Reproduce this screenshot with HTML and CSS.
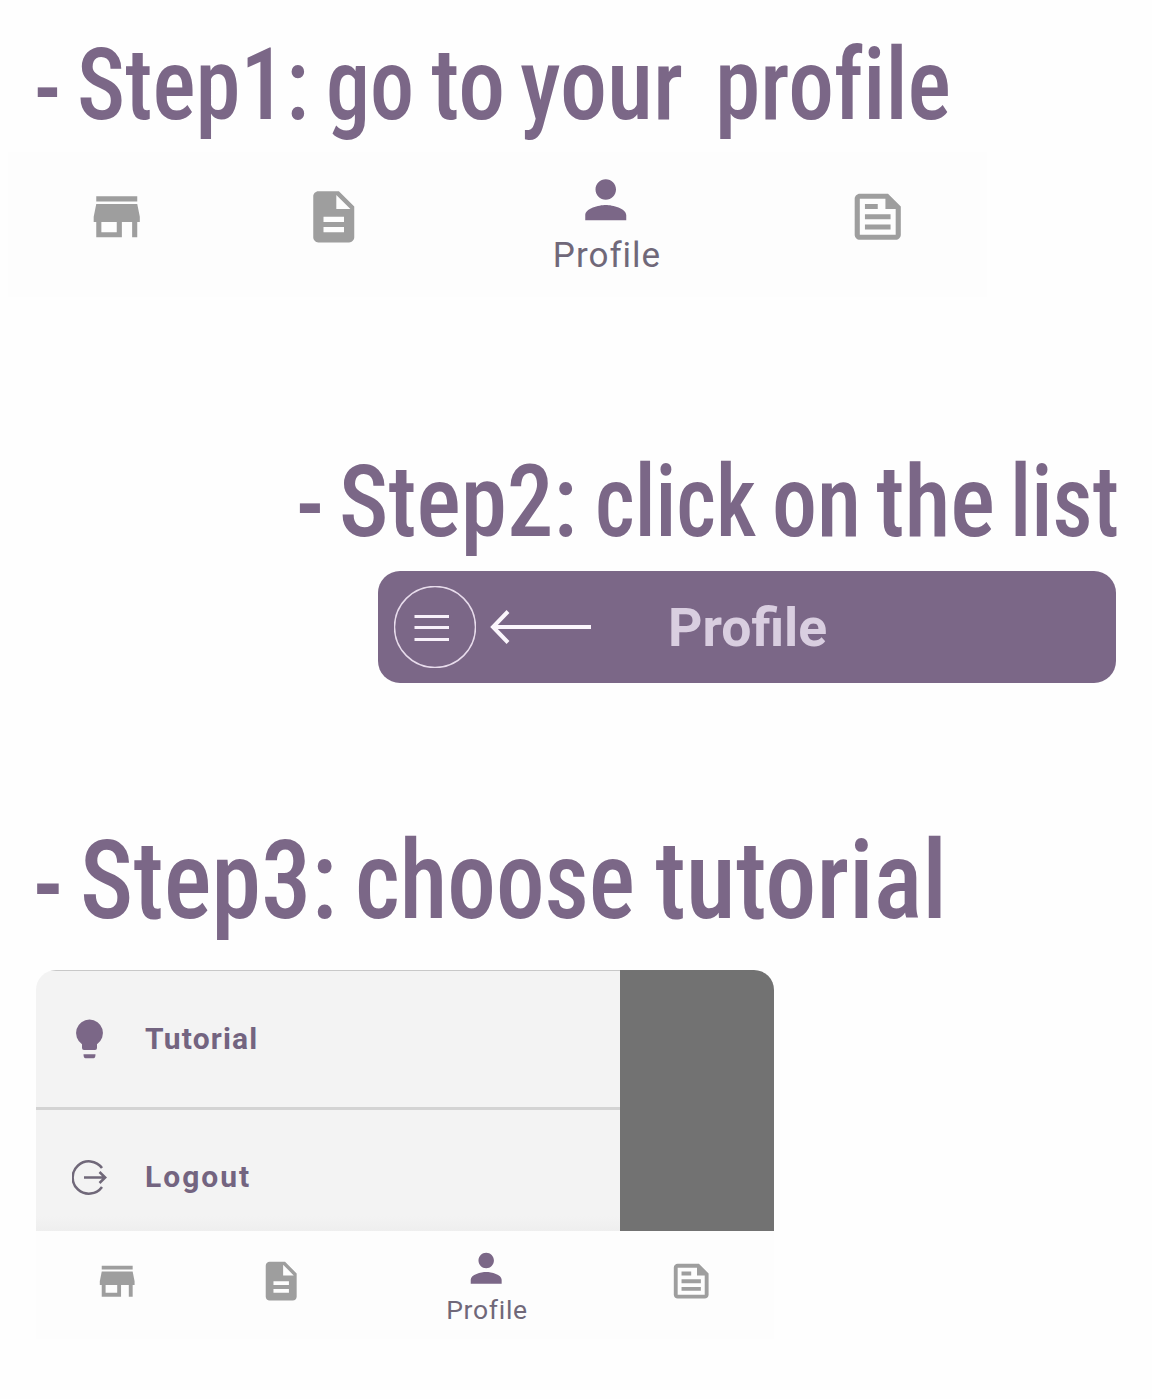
FILE: index.html
```html
<!DOCTYPE html>
<html lang="en">
<head>
<meta charset="utf-8">
<title>How to open the tutorial</title>
<link rel="stylesheet" href="styles.css">
</head>
<body>
<svg class="sprite" aria-hidden="true">
  <symbol id="store" viewBox="0 0 24 24"><path d="M20 4H4v2h16V4zm1 10v-2l-1-5H4l-1 5v2h1v6h10v-6h4v6h2v-6h1zm-9 4H6v-4h6v4z"/></symbol>
  <symbol id="document" viewBox="0 0 24 24"><path d="M14 2H6c-1.1 0-2 .9-2 2v16c0 1.100.9 2 2 2h12c1.100 0 2-.9 2-2V8l-6-6zm2 16H8v-2h8v2zm0-4H8v-2h8v2zm-3-5V3.500L18.500 9H13z"/></symbol>
  <symbol id="person" viewBox="0 0 24 24"><path d="M12 12c2.210 0 4-1.790 4-4s-1.790-4-4-4-4 1.790-4 4 1.790 4 4 4zm0 2c-2.670 0-8 1.340-8 4v2h16v-2c0-2.660-5.330-4-8-4z"/></symbol>
  <symbol id="news" viewBox="0 0 24 24"><path fill-rule="evenodd" d="M16 3H5C3.900 3 3 3.900 3 5v14c0 1.100.9 2 2 2h14c1.100 0 2-.9 2-2V8l-5-5zM5 19V5h10v4h4v10H5zM7 7h5v2H7zM7 11h10v2H7zM7 15h10v2H7z"/></symbol>
</svg>
<main class="guide">
  <section class="step step-one">
    <h1 class="title">
      <svg class="title-line" width="1152" height="152" viewBox="0 0 1152 152">
        <text x="34" y="123" textLength="27" lengthAdjust="spacingAndGlyphs">-</text>
        <text x="77" y="119" textLength="232" lengthAdjust="spacingAndGlyphs">Step1:</text>
        <text x="326" y="119" textLength="88" lengthAdjust="spacingAndGlyphs">go</text>
        <text x="431" y="119" textLength="74" lengthAdjust="spacingAndGlyphs">to</text>
        <text x="520" y="119" textLength="163" lengthAdjust="spacingAndGlyphs">your</text>
        <text x="715" y="119" textLength="236" lengthAdjust="spacingAndGlyphs">profile</text>
      </svg>
    </h1>
    <nav class="tabs tabs-large">
      <span class="tab"><svg><use href="#store"/></svg></span>
      <span class="tab"><svg><use href="#document"/></svg></span>
      <span class="tab active"><svg><use href="#person"/></svg><span class="label">Profile</span></span>
      <span class="tab"><svg><use href="#news"/></svg></span>
    </nav>
  </section>
  <section class="step step-two">
    <h1 class="title">
      <svg class="title-line" width="1152" height="151" viewBox="0 420 1152 151">
        <text x="296" y="539" textLength="28" lengthAdjust="spacingAndGlyphs">-</text>
        <text x="339" y="535.500" textLength="238" lengthAdjust="spacingAndGlyphs">Step2:</text>
        <text x="595" y="535.500" textLength="161" lengthAdjust="spacingAndGlyphs">click</text>
        <text x="772" y="535.500" textLength="89" lengthAdjust="spacingAndGlyphs">on</text>
        <text x="876" y="535.500" textLength="119" lengthAdjust="spacingAndGlyphs">the</text>
        <text x="1010" y="535.500" textLength="109" lengthAdjust="spacingAndGlyphs">list</text>
      </svg>
    </h1>
    <div class="app-bar">
      <svg class="menu" width="82" height="82" viewBox="0 0 82 82"><circle cx="41" cy="41" r="40.500"/><path d="M20.500 30.500H55M20.500 41.500H55M20.500 53.500H55"/></svg>
      <svg class="arrow" width="104" height="36" viewBox="0 0 104 36"><path d="M102 18H4M19 2.500 4 18l15 15.500"/></svg>
      <span class="bar-title">Profile</span>
    </div>
  </section>
  <section class="step step-three">
    <h1 class="title title-big">
      <svg class="title-line" width="1152" height="170" viewBox="0 800 1152 170">
        <text x="33" y="921.500" textLength="30" lengthAdjust="spacingAndGlyphs">-</text>
        <text x="80" y="917.500" textLength="257" lengthAdjust="spacingAndGlyphs">Step3:</text>
        <text x="355" y="917.500" textLength="280" lengthAdjust="spacingAndGlyphs">choose</text>
        <text x="655" y="917.500" textLength="292" lengthAdjust="spacingAndGlyphs">tutorial</text>
      </svg>
    </h1>
    <div class="drawer">
      <div class="menu-list">
        <div class="menu-item"><svg width="36" height="44" viewBox="0 0 36 44"><path class="solid" d="M17.500 2.500A13.500 13.500 0 0 0 10 27.200V31q0 2 2 2h11q2 0 2-2v-3.800A13.500 13.500 0 0 0 17.500 2.500z"/><path class="solid" d="M11.500 37.300h12q0 4-2 4h-8q-2 0-2-4z"/></svg><span>Tutorial</span></div>
        <div class="menu-item logout"><svg width="36" height="44" viewBox="0 0 36 44"><path class="line" d="M30 12A16.200 16.200 0 1 0 30 31M12 21.500h21M27.500 16 33.200 21.500 27.500 27"/></svg><span>Logout</span></div>
      </div>
      <div class="scrim"></div>
    </div>
    <nav class="tabs tabs-small">
      <span class="tab"><svg><use href="#store"/></svg></span>
      <span class="tab"><svg><use href="#document"/></svg></span>
      <span class="tab active"><svg><use href="#person"/></svg><span class="label">Profile</span></span>
      <span class="tab"><svg><use href="#news"/></svg></span>
    </nav>
  </section>
</main>
</body>
</html>
```
FILE: styles.css
```css
* { box-sizing: border-box; }
body { margin: 0; background: #fefefe; font-family: Roboto, "Liberation Sans", sans-serif; color: #7b6787; }
svg { display: block; flex: none; }
.sprite { display: none; }
.guide { width: 1152px; height: 1399px; overflow: hidden; }

.title { margin: 0; font-size: 101px; font-weight: 500; font-stretch: 75%; font-variant-ligatures: none; }
.title-big { font-size: 110px; }
.title-line { overflow: visible; }
.title-line text { fill: #7b6787; }

.step-one { height: 420px; }
.step-two { height: 380px; }

.tabs { display: grid; background: #fdfdfd; }
.tab { display: flex; flex-direction: column; align-items: center; fill: #9e9e9e; }
.active { fill: #7b6787; color: #706879; }
.label { white-space: nowrap; }
.tabs-large { width: 979px; height: 145px; margin-left: 8px; grid-template-columns: 217px 218px 326px 218px; }
.tabs-large svg { width: 61.5px; height: 61.5px; }
.tabs-large .tab { padding-top: 34px; }
.tabs-large .active { padding-top: 17px; }
.tabs-large .label { font-size: 35px; line-height: 40px; letter-spacing: 1px; margin: 5px 0 0 2px; }

.app-bar { display: flex; align-items: center; width: 738px; height: 112px; margin-left: 378px; padding-left: 16px; border-radius: 22px; background: #7b6787; }
.menu circle { fill: none; stroke: #e8dcec; stroke-width: 1.5; }
.menu path { stroke: #f8f1fa; stroke-width: 3; }
.arrow { margin-left: 13px; }
.arrow path { fill: none; stroke: #fbf6fc; stroke-width: 4; }
.bar-title { margin-left: 75px; padding-top: 1px; font-size: 53.5px; font-weight: 700; color: #d9cee0; }

.drawer { display: flex; width: 738px; height: 261px; margin-left: 36px; border-radius: 20px 20px 0 0; overflow: hidden; }
.menu-list { width: 584px; background: linear-gradient(#f3f3f3 245px, #eeeeee); border-top: 1.5px solid #c8c8c8; }
.menu-item { display: flex; align-items: center; gap: 37px; height: 135px; padding-left: 36px; font-size: 30px; font-weight: 700; letter-spacing: 1.2px; color: #736480; }
.menu-item:first-child { border-bottom: 3px solid #d3d3d3; height: 139px; }
.menu-item:first-child span { margin-top: -2px; }
.logout { letter-spacing: 2px; }
.logout span { margin-top: -2px; }
.scrim { flex: 1; background: #727272; }
.solid { fill: #7b6787; }
.line { fill: none; stroke: #706879; stroke-width: 2.5; }

.tabs-small { width: 738px; height: 108px; margin-left: 35.5px; grid-template-columns: 164px 164px 246px 164px; }
.tabs-small svg { width: 46.4px; height: 46.4px; }
.tabs-small .tab { padding-top: 27px; }
.tabs-small .active { padding-top: 14px; }
.tabs-small .label { font-size: 26.5px; line-height: 30px; letter-spacing: .7px; margin: 4px 0 0 1px; }
```
